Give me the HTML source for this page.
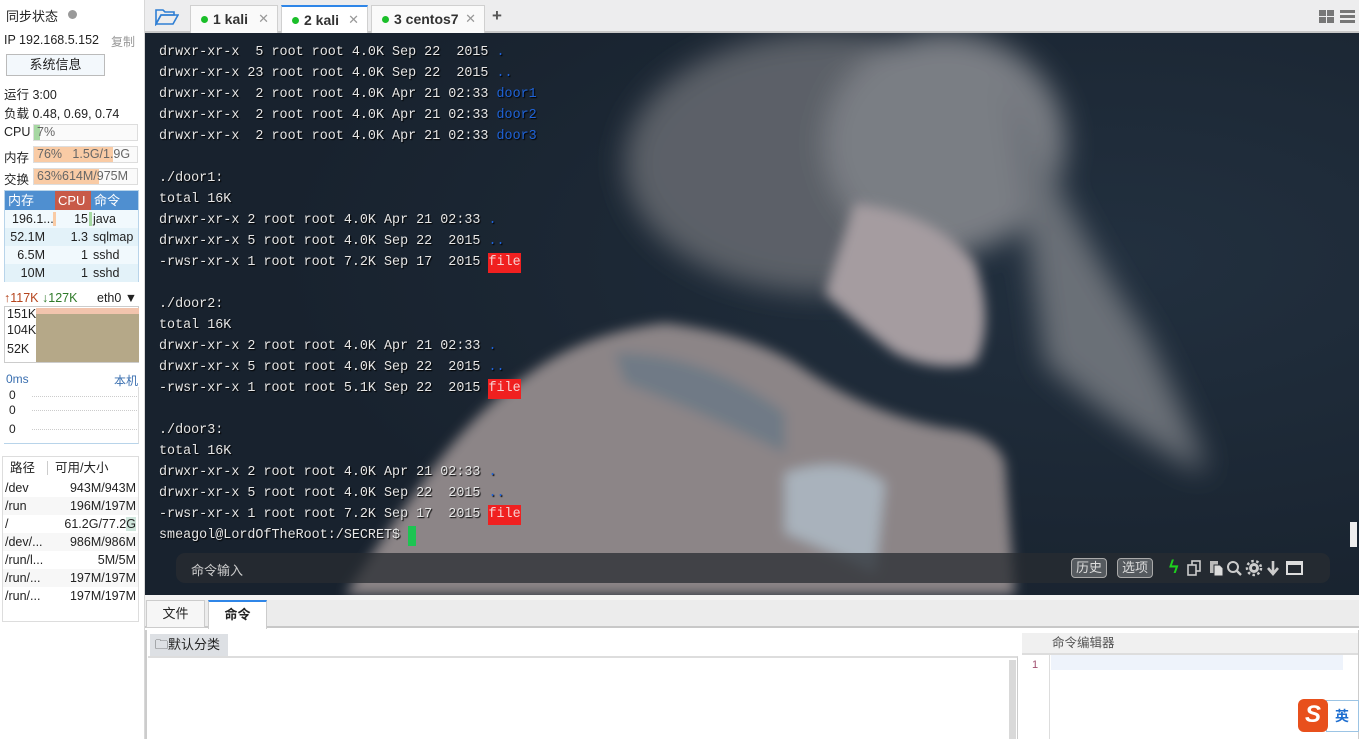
<!DOCTYPE html>
<html><head><meta charset="utf-8"><style>
*{margin:0;padding:0;box-sizing:border-box}
body{width:1359px;height:739px;overflow:hidden;background:#fff;font-family:"Liberation Sans","Noto Sans CJK SC",sans-serif;font-size:12px;color:#222;position:relative}
.abs{position:absolute}
#side{left:0;top:0;width:145px;height:739px;background:#fff;border-right:1px solid #d8d8d8}
.bar{position:absolute;left:33px;width:105px;height:17px;border:1px solid #ddd;background:#fafafa;font-size:12.5px;line-height:15px;color:#666;padding-left:3px}
.bar i{position:absolute;left:0;top:0;bottom:0}
.bar span{position:relative}
#term{left:145px;top:33px;width:1214px;height:562px;background:#1b2533;overflow:hidden}
.t{position:absolute;left:14px;font-family:"Liberation Mono",monospace;font-size:13.4px;color:#e6e6e6;white-space:pre;line-height:21px;text-shadow:1px 1px 1px #000}
.b{color:#1f63d8}
.r{background:#f02020;color:#f6d0d0;text-shadow:none;padding:2px 0 3px}
.tab{position:absolute;top:5px;height:28px;background:#fafafa;border:1px solid #d0d0d0;border-bottom:none;font-size:14px;font-weight:bold;color:#333;line-height:26px;padding-left:10px}
.tab .d{display:inline-block;width:7px;height:7px;border-radius:50%;background:#1bbf2a;margin-right:5px;vertical-align:1px}
.tab .x{position:absolute;right:8px;top:0;font-weight:normal;color:#999;font-size:13px}
.proc div{height:18px;line-height:18px;position:relative;font-size:12.5px}
.disk div{height:18px;line-height:18px;font-size:12.5px;position:relative;padding-left:2px}
.disk span{position:absolute;right:2px}
.btn{position:absolute;top:5px;height:20px;border:1px solid #aaa;border-radius:4px;color:#ddd;font-size:13px;line-height:18px;padding:0 4px;background:#555a5f}
</style></head><body>

<div id="side" class="abs">
 <div class="abs" style="left:6px;top:6px;font-size:13px">同步状态</div>
 <div class="abs" style="left:68px;top:10px;width:9px;height:9px;border-radius:50%;background:#999"></div>
 <div class="abs" style="left:4px;top:33px;font-size:12.5px">IP 192.168.5.152</div>
 <div class="abs" style="left:111px;top:33px;color:#999;font-size:12px">复制</div>
 <div class="abs" style="left:6px;top:54px;width:99px;height:22px;border:1px solid #bbb;background:#f3f8fc;text-align:center;line-height:20px;font-size:13px">系统信息</div>
 <div class="abs" style="left:4px;top:84px;font-size:12.5px">运行 3:00</div>
 <div class="abs" style="left:4px;top:103px;font-size:12.5px">负载 0.48, 0.69, 0.74</div>
 <div class="abs" style="left:4px;top:125px;font-size:12.5px">CPU</div>
 <div class="bar" style="top:124px"><i style="width:6px;background:#a6d8a2"></i><span>7%</span></div>
 <div class="abs" style="left:4px;top:147px;font-size:12.5px">内存</div>
 <div class="bar" style="top:146px"><i style="width:79px;background:#f9cba5"></i><span>76% &nbsp;&nbsp;1.5G/1.9G</span></div>
 <div class="abs" style="left:4px;top:169px;font-size:12.5px">交换</div>
 <div class="bar" style="top:168px"><i style="width:65px;background:#f9cba5"></i><span>63%614M/975M</span></div>
 <div class="abs" style="left:4px;top:190px;width:135px;height:92px;border:1px solid #b8d4ea;background:#f1f9fd">
  <div style="height:19px;background:#4f8fd0;color:#fff;font-size:13px;line-height:19px;position:relative">
   <span style="position:absolute;left:3px">内存</span>
   <span style="position:absolute;left:50px;width:36px;height:19px;background:#c85a48;padding-left:3px">CPU</span>
   <span style="position:absolute;left:89px">命令</span></div>
  <div class="proc">
   <div><span style="position:absolute;left:7px">196.1...</span><span style="position:absolute;left:48px;top:2px;width:3px;height:14px;background:#f9cba5"></span><span style="position:absolute;right:50px">15</span><span style="position:absolute;left:84px;top:2px;width:3px;height:14px;background:#a6d8a2"></span><span style="position:absolute;left:88px">java</span></div>
   <div style="background:#e3f2f9"><span style="position:absolute;right:93px">52.1M</span><span style="position:absolute;right:50px">1.3</span><span style="position:absolute;left:88px">sqlmap</span></div>
   <div><span style="position:absolute;right:93px">6.5M</span><span style="position:absolute;right:50px">1</span><span style="position:absolute;left:88px">sshd</span></div>
   <div style="background:#e3f2f9"><span style="position:absolute;right:93px">10M</span><span style="position:absolute;right:50px">1</span><span style="position:absolute;left:88px">sshd</span></div>
  </div>
 </div>
 <div class="abs" style="left:4px;top:291px;font-size:12.5px"><span style="color:#b5441c">↑117K</span> <span style="color:#2f7a2a">↓127K</span></div>
 <div class="abs" style="left:97px;top:291px;font-size:12.5px">eth0 ▼</div>
 <div class="abs" style="left:4px;top:306px;width:135px;height:57px;border:1px solid #ccc;background:#fff">
  <div class="abs" style="left:31px;top:3px;width:103px;height:52px;background:#b5a888"></div>
  <div class="abs" style="left:31px;top:1px;width:103px;height:6px;background:#f2c4ad"></div>
  <div class="abs" style="left:2px;top:0;font-size:12.5px">151K</div>
  <div class="abs" style="left:2px;top:16px;font-size:12.5px">104K</div>
  <div class="abs" style="left:2px;top:35px;font-size:12.5px">52K</div>
 </div>
 <div class="abs" style="left:6px;top:372px;color:#3a6fb0">0ms</div>
 <div class="abs" style="left:114px;top:372px;color:#3a6fb0">本机</div>
 <div class="abs" style="left:4px;top:387px;width:135px;height:57px;border-bottom:1px solid #b8d4ea;border-right:1px solid #ddd">
  <div class="abs" style="left:5px;top:1px">0</div><div class="abs" style="left:5px;top:16px">0</div><div class="abs" style="left:5px;top:35px">0</div>
  <div class="abs" style="left:28px;top:9px;width:105px;border-top:1px dotted #ccc"></div>
  <div class="abs" style="left:28px;top:23px;width:105px;border-top:1px dotted #ccc"></div>
  <div class="abs" style="left:28px;top:42px;width:105px;border-top:1px dotted #ccc"></div>
 </div>
 <div class="abs" style="left:2px;top:456px;width:137px;height:166px;border:1px solid #ddd">
  <div style="height:22px;line-height:22px;position:relative;font-size:12.5px"><span style="position:absolute;left:7px">路径</span><span style="position:absolute;left:44px;top:4px;height:14px;border-left:1px solid #ccc"></span><span style="position:absolute;left:52px">可用/大小</span></div>
  <div class="disk">
   <div>/dev<span>943M/943M</span></div>
   <div style="background:#f7f7f7">/run<span>196M/197M</span></div>
   <div>/<span>61.2G/77.2<b style="font-weight:normal;background:#cfe6dc">G</b></span></div>
   <div style="background:#f7f7f7">/dev/...<span>986M/986M</span></div>
   <div>/run/l...<span>5M/5M</span></div>
   <div style="background:#f7f7f7">/run/...<span>197M/197M</span></div>
   <div>/run/...<span>197M/197M</span></div>
  </div>
 </div>
</div>

<!-- tabs -->
<div class="abs" style="left:145px;top:0;width:1214px;height:33px;background:#ededee;border-bottom:2px solid #c8c8c8"></div>
<svg class="abs" style="left:155px;top:8px" width="24" height="18" viewBox="0 0 24 18"><path d="M1 2h7l2 2h9v3H6L1 16z" fill="none" stroke="#2f7fd4" stroke-width="1.6"/><path d="M1 16L6 7h17l-5 9z" fill="none" stroke="#2f7fd4" stroke-width="1.6"/></svg>
<div class="tab" style="left:190px;width:88px"><span class="d"></span>1 kali<span class="x">✕</span></div>
<div class="tab" style="left:281px;width:87px;background:#fff;border-top:2px solid #2f86e8"><span class="d"></span>2 kali<span class="x">✕</span></div>
<div class="tab" style="left:371px;width:114px"><span class="d"></span>3 centos7<span class="x">✕</span></div>
<div class="abs" style="left:492px;top:6px;font-size:17px;font-weight:bold;color:#555">+</div>
<div class="abs" style="left:1319px;top:10px;width:15px;height:13px;background:linear-gradient(90deg,#777 0 7px,transparent 7px 8px,#777 8px)"></div>
<div class="abs" style="left:1319px;top:16px;width:15px;height:1px;background:#ededee"></div>
<div class="abs" style="left:1340px;top:10px;width:15px;height:13px;border-top:3px solid #777;border-bottom:3px solid #777"><div style="margin-top:2px;height:3px;background:#777"></div></div>

<!-- terminal -->
<div id="term" class="abs">
<svg class="abs" style="left:0;top:0" width="1214" height="562">
 <defs>
  <filter id="f1"><feGaussianBlur stdDeviation="14"/></filter>
  <filter id="f2"><feGaussianBlur stdDeviation="6"/></filter>
  <radialGradient id="bg" cx="0.8" cy="0.4" r="0.7"><stop offset="0" stop-color="#22303f"/><stop offset="1" stop-color="#18222e"/></radialGradient>
 </defs>
 <rect width="1214" height="562" fill="url(#bg)"/>
 <g filter="url(#f1)">
  <ellipse cx="680" cy="130" rx="200" ry="130" fill="#5c6168"/>
  <ellipse cx="800" cy="110" rx="120" ry="110" fill="#7a7e84"/>
  <path d="M860 40 Q930 200 1000 300 Q1060 420 1060 440 Q980 400 900 330 Z" fill="#6a7077"/>
 </g>
 <g filter="url(#f2)">
  <path d="M710 170 Q790 180 830 230 Q850 290 830 330 Q790 340 750 320 Q710 290 680 260 Z" fill="#a59ca0"/>
  <path d="M385 340 Q440 300 520 290 Q600 300 650 330 Q720 380 800 395 Q850 400 860 430 L870 562 L200 562 Q260 470 300 420 Q340 370 385 340 Z" fill="#8c8587"/>
  <path d="M470 320 Q560 320 640 380 L640 420 Q560 380 480 350 Z" fill="#6f7a86"/>
  <path d="M640 440 Q700 420 740 450 L730 540 Q690 520 640 500 Z" fill="#a9b2bc"/>
 </g>
</svg>
<div class="t" style="top:9px"><span>drwxr-xr-x  5 root root 4.0K Sep 22  2015 <span class="b">.</span>
drwxr-xr-x 23 root root 4.0K Sep 22  2015 <span class="b">..</span>
drwxr-xr-x  2 root root 4.0K Apr 21 02:33 <span class="b">door1</span>
drwxr-xr-x  2 root root 4.0K Apr 21 02:33 <span class="b">door2</span>
drwxr-xr-x  2 root root 4.0K Apr 21 02:33 <span class="b">door3</span>

./door1:
total 16K
drwxr-xr-x 2 root root 4.0K Apr 21 02:33 <span class="b">.</span>
drwxr-xr-x 5 root root 4.0K Sep 22  2015 <span class="b">..</span>
-rwsr-xr-x 1 root root 7.2K Sep 17  2015 <span class="r">file</span>

./door2:
total 16K
drwxr-xr-x 2 root root 4.0K Apr 21 02:33 <span class="b">.</span>
drwxr-xr-x 5 root root 4.0K Sep 22  2015 <span class="b">..</span>
-rwsr-xr-x 1 root root 5.1K Sep 22  2015 <span class="r">file</span>

./door3:
total 16K
drwxr-xr-x 2 root root 4.0K Apr 21 02:33 <span class="b">.</span>
drwxr-xr-x 5 root root 4.0K Sep 22  2015 <span class="b">..</span>
-rwsr-xr-x 1 root root 7.2K Sep 17  2015 <span class="r">file</span>
smeagol@LordOfTheRoot:/SECRET$ <span style="background:#1dc452;padding:2px 0 3px">&nbsp;</span></span></div>
<div class="abs" style="left:1205px;top:489px;width:7px;height:25px;background:#eee"></div>
<div class="abs" style="left:31px;top:520px;width:1154px;height:30px;background:rgba(40,44,50,0.75);border-radius:9px">
 <div class="abs" style="left:15px;top:7px;color:#ccc;font-size:13px">命令输入</div>
 <div class="btn" style="left:895px">历史</div>
 <div class="btn" style="left:941px">选项</div>
 <div class="abs" style="left:993px;top:4px;color:#1ed01e;font-size:18px;font-weight:bold">ϟ</div>
 <svg class="abs" style="left:1010px;top:6px" width="130" height="18" viewBox="0 0 130 18">
  <rect x="6" y="2" width="8" height="10" fill="none" stroke="#ccc" stroke-width="1.6"/><rect x="2" y="6" width="8" height="10" fill="#2a2f35" stroke="#ccc" stroke-width="1.6"/>
  <rect x="24" y="2" width="8" height="12" fill="#bbb"/><path d="M28 6h6l3 3v8h-9z" fill="#ddd" stroke="#2a2f35"/>
  <circle cx="47" cy="8" r="5" fill="none" stroke="#ccc" stroke-width="2"/><path d="M51 12l4 4" stroke="#ccc" stroke-width="2.4"/>
  <circle cx="68" cy="9" r="5" fill="#ccc"/><circle cx="68" cy="9" r="7" fill="none" stroke="#ccc" stroke-width="2.5" stroke-dasharray="2.5 2.5"/><circle cx="68" cy="9" r="2" fill="#2a2f35"/>
  <path d="M87 2v12M82 9l5 6 5-6" fill="none" stroke="#ccc" stroke-width="2.6"/>
  <rect x="101" y="3" width="15" height="12" fill="none" stroke="#ddd" stroke-width="2"/><rect x="101" y="3" width="15" height="3" fill="#ddd"/>
 </svg>
</div>
</div>

<!-- bottom -->
<div class="abs" style="left:145px;top:595px;width:1214px;height:5px;background:#f4f4f4"></div>
<div class="abs" style="left:145px;top:600px;width:1214px;height:28px;background:#ececec;border-bottom:2px solid #c8c8c8"></div>
<div class="abs" style="left:146px;top:600px;width:59px;height:28px;background:#f6f6f6;border:1px solid #ccc;text-align:center;line-height:26px;font-size:13px">文件</div>
<div class="abs" style="left:208px;top:600px;width:59px;height:29px;background:#fff;border:1px solid #ccc;border-top:2px solid #2f86e8;border-bottom:none;text-align:center;line-height:25px;font-size:13px;font-weight:bold">命令</div>
<div class="abs" style="left:145px;top:630px;width:1214px;height:109px;border-left:2px solid #ccc;border-right:1px solid #ccc;background:#fff"></div>
<div class="abs" style="left:150px;top:634px;width:78px;height:22px;background:#dde0e4;font-size:13px;line-height:22px;padding-left:5px">🗀默认分类</div>
<div class="abs" style="left:148px;top:656px;width:870px;height:83px;border-top:2px solid #ddd;border-right:1px solid #ccc"></div>
<div class="abs" style="left:1009px;top:660px;width:7px;height:79px;background:#d9d9d9"></div>
<div class="abs" style="left:1022px;top:633px;width:336px;height:22px;background:#f0f0f0;border-bottom:2px solid #ddd;font-size:12.5px;color:#555;line-height:20px;padding-left:30px">命令编辑器</div>
<div class="abs" style="left:1022px;top:655px;width:28px;height:84px;border-right:1px solid #ddd;color:#a05070;font-size:11px;padding:4px 0 0 10px">1</div>
<div class="abs" style="left:1051px;top:655px;width:292px;height:15px;background:#eef3fb"></div>
<div class="abs" style="left:1326px;top:700px;width:33px;height:32px;border:1px solid #9cc4e4;background:#fff;color:#1f6fd0;font-weight:bold;font-size:14px;line-height:30px;padding-left:8px">英</div>
<div class="abs" style="left:1298px;top:699px;width:30px;height:33px;background:#e8501c;border-radius:6px;color:#fff;font-weight:bold;font-size:24px;line-height:32px;text-align:center;font-style:italic">S</div>
</body></html>
